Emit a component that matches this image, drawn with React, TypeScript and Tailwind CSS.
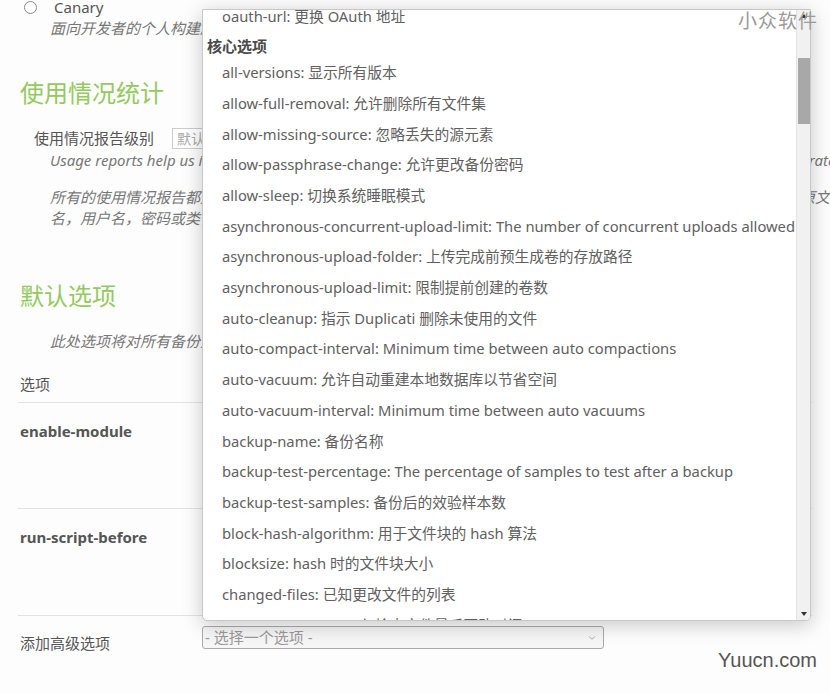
import { ChevronDown } from "lucide-react";

// Items visible in the open dropdown list
const items: string[] = [
  "all-versions: 显示所有版本",
  "allow-full-removal: 允许删除所有文件集",
  "allow-missing-source: 忽略丢失的源元素",
  "allow-passphrase-change: 允许更改备份密码",
  "allow-sleep: 切换系统睡眠模式",
  "asynchronous-concurrent-upload-limit: The number of concurrent uploads allowed",
  "asynchronous-upload-folder: 上传完成前预生成卷的存放路径",
  "asynchronous-upload-limit: 限制提前创建的卷数",
  "auto-cleanup: 指示 Duplicati 删除未使用的文件",
  "auto-compact-interval: Minimum time between auto compactions",
  "auto-vacuum: 允许自动重建本地数据库以节省空间",
  "auto-vacuum-interval: Minimum time between auto vacuums",
  "backup-name: 备份名称",
  "backup-test-percentage: The percentage of samples to test after a backup",
  "backup-test-samples: 备份后的效验样本数",
  "block-hash-algorithm: 用于文件块的 hash 算法",
  "blocksize: hash 时的文件块大小",
  "changed-files: 已知更改文件的列表",
  "check-filetime-only: 仅检查文件最后更改时间",
];

function OptionList() {
  return (
    <div className="absolute left-[202px] top-[9px] w-[609px] h-[612px] bg-white border border-[#c8c8c8] rounded-b-[5px] shadow-[0_4px_20px_rgba(0,0,0,0.22)] overflow-hidden flex">
      {/* list content, scrolled */}
      <div className="flex-1 overflow-hidden">
        <div className="-mt-[9px]">
          <div className="h-[30.7px] pl-[19px] flex items-center text-[14.75px] text-[#606060] whitespace-nowrap">
            oauth-url: 更换 OAuth 地址
          </div>
          <div className="h-[25.3px] pl-[4px] pt-[3px] flex items-center text-[15px] font-bold text-[#4a4a4a]">
            核心选项
          </div>
          {items.map((t) => (
            <div
              key={t}
              className="h-[30.7px] pl-[19px] flex items-center text-[14.75px] text-[#606060] whitespace-nowrap"
            >
              {t}
            </div>
          ))}
        </div>
      </div>
      {/* scrollbar */}
      <div className="w-[14px] h-full bg-[#f1f1f1] border-l border-[#e4e4e4] flex flex-col items-center">
        <div className="h-[12px] flex items-center justify-center">
          <div className="w-0 h-0 border-x-[3px] border-x-transparent border-b-[4px] border-b-[#333]" />
        </div>
        <div className="mt-[36px] w-[12px] h-[66px] bg-[#a8a8a8]" />
        <div className="flex-1" />
        <div className="h-[12px] flex items-center justify-center">
          <div className="w-0 h-0 border-x-[3px] border-x-transparent border-t-[4px] border-t-[#333]" />
        </div>
      </div>
    </div>
  );
}

export default function App() {
  return (
    <div className="relative w-[830px] h-[693px] overflow-hidden bg-[#fdfdfd] font-['Noto_Sans','Noto_Sans_CJK_SC',sans-serif] text-[15px] text-[#555]">
      <div className="pl-[20px]">
        {/* Canary */}
        <div className="flex items-center h-[16px] pl-[4px] -mt-[1px]">
          <span className="w-[13px] h-[13px] rounded-full border border-[#888] bg-white" />
          <span className="ml-[17px] text-[#555]">Canary</span>
        </div>
        <p className="ml-[30px] mt-[3px] leading-[20px] italic text-[#777] whitespace-nowrap">
          面向开发者的个人构建版本，可能包含不稳定的功能
        </p>

        {/* 使用情况统计 */}
        <h2 className="mt-[40px] leading-[30px] text-[24px] text-[#94c95f]">使用情况统计</h2>
        <div className="mt-[19px] ml-[14px] flex items-center h-[22px]">
          <span className="text-[#555]">使用情况报告级别</span>
          <div className="ml-[18px] h-[21px] w-[80px] border border-[#ccc] bg-white px-[4px] text-[14px] leading-[19px] text-[#aaa]">
            默认
          </div>
        </div>
        <p className="ml-[30px] mt-[1px] leading-[20px] italic text-[#777] whitespace-nowrap">
          Usage reports help us improve the user experience and evaluate impact of new features. We also use these to generate public usage statistics
        </p>
        <div className="ml-[30px] mt-[17px] leading-[21px] italic text-[#777] whitespace-nowrap">
          <p>所有的使用情况报告都是匿名发送的，不包含任何个人信息。它们包含文件数量、大小、备份时长等，但不会包含原文件</p>
          <p>名，用户名，密码或类似的敏感信息。</p>
        </div>

        {/* 默认选项 */}
        <h2 className="mt-[52px] leading-[30px] text-[24px] text-[#94c95f]">默认选项</h2>
        <p className="ml-[30px] mt-[20px] leading-[20px] italic text-[#777] whitespace-nowrap">
          此处选项将对所有备份生效
        </p>
        <div className="mt-[23px] leading-[20px] text-[#555]">选项</div>
        <div className="mt-[8px] mr-[18px] border-t border-[#e2e2e2] -ml-[2px]" />
        <div className="mt-[18px] leading-[20px] font-bold text-[#555]">enable-module</div>
        <div className="mt-[67px] mr-[18px] border-t border-[#e2e2e2] -ml-[2px]" />
        <div className="mt-[18px] leading-[20px] font-bold text-[#555]">run-script-before</div>
        <div className="mt-[68px] mr-[18px] border-t border-[#e2e2e2] -ml-[2px]" />

        {/* 添加高级选项 */}
        <div className="flex items-start">
          <span className="w-[182px] mt-[17px] leading-[20px] text-[#555]">添加高级选项</span>
          <div className="mt-[10px] w-[402px] h-[23px] border border-[#aaa] rounded-[3px] bg-[#f6f6f6] flex items-center justify-between pl-[2px] pr-[6px] text-[15px] text-[#999]">
            <span>- 选择一个选项 -</span>
            <ChevronDown className="size-[10px] text-[#999]" strokeWidth={2} />
          </div>
        </div>
      </div>

      <OptionList />

      {/* watermarks */}
      <div className="absolute right-[12px] top-[9px] text-[19px] leading-[24px] text-[#9a9a9a] tracking-[1px]">
        小众软件
      </div>
      <div className="absolute right-[13px] top-[648px] font-['Liberation_Sans',sans-serif] text-[20px] leading-[24px] text-[#555]">
        Yuucn.com
      </div>
    </div>
  );
}
